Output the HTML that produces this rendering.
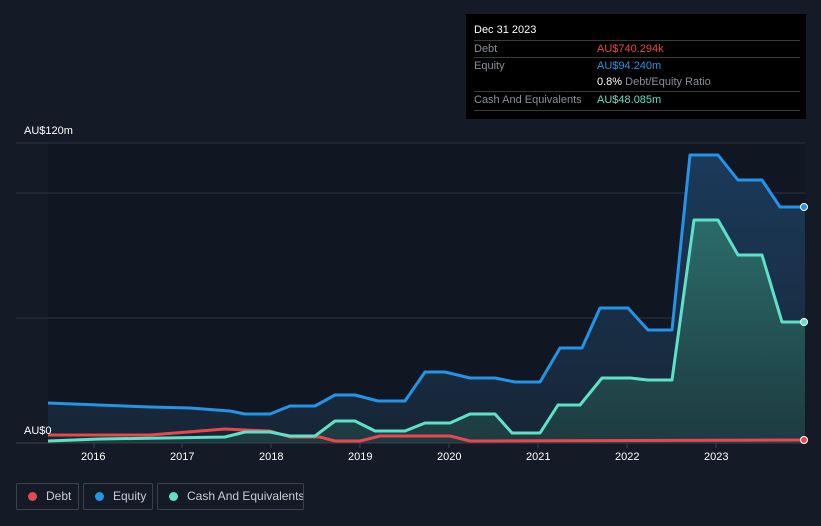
<!DOCTYPE html>
<html style="margin:0;width:821px;height:526px;overflow:hidden"><head><style>
body{margin:0;width:821px;height:526px;background:#151b26;font-family:"Liberation Sans",sans-serif;overflow:hidden;position:relative}
.tt{position:absolute;left:466px;top:14px;width:340px;height:105px;background:#000;color:#fff;font-size:11px}
.row{position:absolute;left:8px;width:326px;border-top:1px solid #3a3a3a;height:17px;line-height:17px}
.l{position:absolute;left:0;color:#8a8f98;white-space:nowrap}.v{position:absolute;left:123px;white-space:nowrap}
.leg{position:absolute;top:483px;height:27px;border:1px solid #3b414d;border-radius:2px;color:#c9ccd2;font-size:12px;line-height:25px;box-sizing:border-box;white-space:nowrap;overflow:hidden}
.dot{display:inline-block;width:9px;height:9px;border-radius:50%;margin:0 9px 0 11px;vertical-align:-1px}
.ax{position:absolute;color:#fff;font-size:11px}
</style></head><body>
<svg width="821" height="526" style="position:absolute;left:0;top:0">
<defs>
<linearGradient id="ge" x1="0" y1="0" x2="0" y2="1"><stop offset="0" stop-color="#1b3a5a"/><stop offset="1" stop-color="#172536"/></linearGradient>
<linearGradient id="gc" x1="0" y1="0" x2="0" y2="1"><stop offset="0" stop-color="#2b6c6a"/><stop offset="1" stop-color="#1d3a40"/></linearGradient>
</defs>
<rect x="48" y="143" width="757" height="300" fill="#111722"/>
<line x1="16" y1="143" x2="805" y2="143" stroke="#2c323d"/>
<line x1="16" y1="193" x2="805" y2="193" stroke="#2c323d"/>
<line x1="16" y1="318" x2="805" y2="318" stroke="#2c323d"/>
<polygon fill="url(#ge)" points="48,403 150,407 190,408 230,411 245,414 270,414 290,406 315,406 335,395 355,395 378,401 405,401 425,372 445,372 470,378 495,378 515,382 540,382 560,348 582,348 600,308 628,308 648,330 672,330 690,155 718,155 738,180 762,180 780,207 805,207 805,443 48,443"/>
<polygon fill="url(#gc)" points="48,441 100,439 225,437 245,432 270,432 290,436 315,436 335,421 355,421 375,431 405,431 425,423 450,423 470,414 495,414 512,433 540,433 558,405 580,405 602,378 630,378 648,380 672,380 694,220 718,220 738,255 762,255 782,322 805,322 805,443 48,443"/>
<line x1="16" y1="443" x2="805" y2="443" stroke="#3a404b"/>
<g fill="none" stroke-width="3" stroke-linejoin="round">
<polyline stroke="#e5484d" points="48,435 150,435 225,429 245,430 270,431 290,437 320,437 335,441 360,441 380,436 450,436 470,441 805,440"/>
<polyline stroke="#5fe0c8" points="48,441 100,439 225,437 245,432 270,432 290,436 315,436 335,421 355,421 375,431 405,431 425,423 450,423 470,414 495,414 512,433 540,433 558,405 580,405 602,378 630,378 648,380 672,380 694,220 718,220 738,255 762,255 782,322 805,322"/>
<polyline stroke="#2394e8" points="48,403 150,407 190,408 230,411 245,414 270,414 290,406 315,406 335,395 355,395 378,401 405,401 425,372 445,372 470,378 495,378 515,382 540,382 560,348 582,348 600,308 628,308 648,330 672,330 690,155 718,155 738,180 762,180 780,207 805,207"/>
</g>
<circle cx="804" cy="207" r="3.5" fill="#2394e8" stroke="#fff" stroke-width="1"/>
<circle cx="804" cy="322" r="3.5" fill="#5fe0c8" stroke="#fff" stroke-width="1"/>
<circle cx="804" cy="440" r="3.5" fill="#e5484d" stroke="#fff" stroke-width="1"/>
<g stroke="#3a404b"><line x1="94" y1="443" x2="94" y2="448"/><line x1="182" y1="443" x2="182" y2="448"/><line x1="271" y1="443" x2="271" y2="448"/><line x1="360" y1="443" x2="360" y2="448"/><line x1="449" y1="443" x2="449" y2="448"/><line x1="538" y1="443" x2="538" y2="448"/><line x1="627" y1="443" x2="627" y2="448"/><line x1="716" y1="443" x2="716" y2="448"/></g>
</svg>
<div class="ax" style="left:24px;top:125px">AU$120m</div>
<div class="ax" style="left:24px;top:425px">AU$0</div>
<div class="ax" style="left:81px;top:451px">2016</div>
<div class="ax" style="left:170px;top:451px">2017</div>
<div class="ax" style="left:259px;top:451px">2018</div>
<div class="ax" style="left:348px;top:451px">2019</div>
<div class="ax" style="left:437px;top:451px">2020</div>
<div class="ax" style="left:526px;top:451px">2021</div>
<div class="ax" style="left:615px;top:451px">2022</div>
<div class="ax" style="left:704px;top:451px">2023</div>
<div class="tt">
<div style="position:absolute;left:8px;top:10px">Dec 31 2023</div>
<div class="row" style="top:26px"><span class="l">Debt</span><span class="v" style="color:#e5484d">AU$740.294k</span></div>
<div class="row" style="top:43px"><span class="l">Equity</span><span class="v" style="color:#2394e8">AU$94.240m</span></div>
<div class="row" style="top:60px;border-top:none"><span class="v"><b style="font-weight:normal;color:#fff">0.8%</b> <span style="color:#8a8f98">Debt/Equity Ratio</span></span></div>
<div class="row" style="top:77px"><span class="l">Cash And Equivalents</span><span class="v" style="color:#5fe0c8">AU$48.085m</span></div>
<div class="row" style="top:96px;height:0"></div>
</div>
<div class="leg" style="left:16px;width:63px"><span class="dot" style="background:#e5484d"></span>Debt</div>
<div class="leg" style="left:83px;width:70px"><span class="dot" style="background:#2394e8"></span>Equity</div>
<div class="leg" style="left:157px;width:147px"><span class="dot" style="background:#5fe0c8"></span>Cash And Equivalents</div>
</body></html>
